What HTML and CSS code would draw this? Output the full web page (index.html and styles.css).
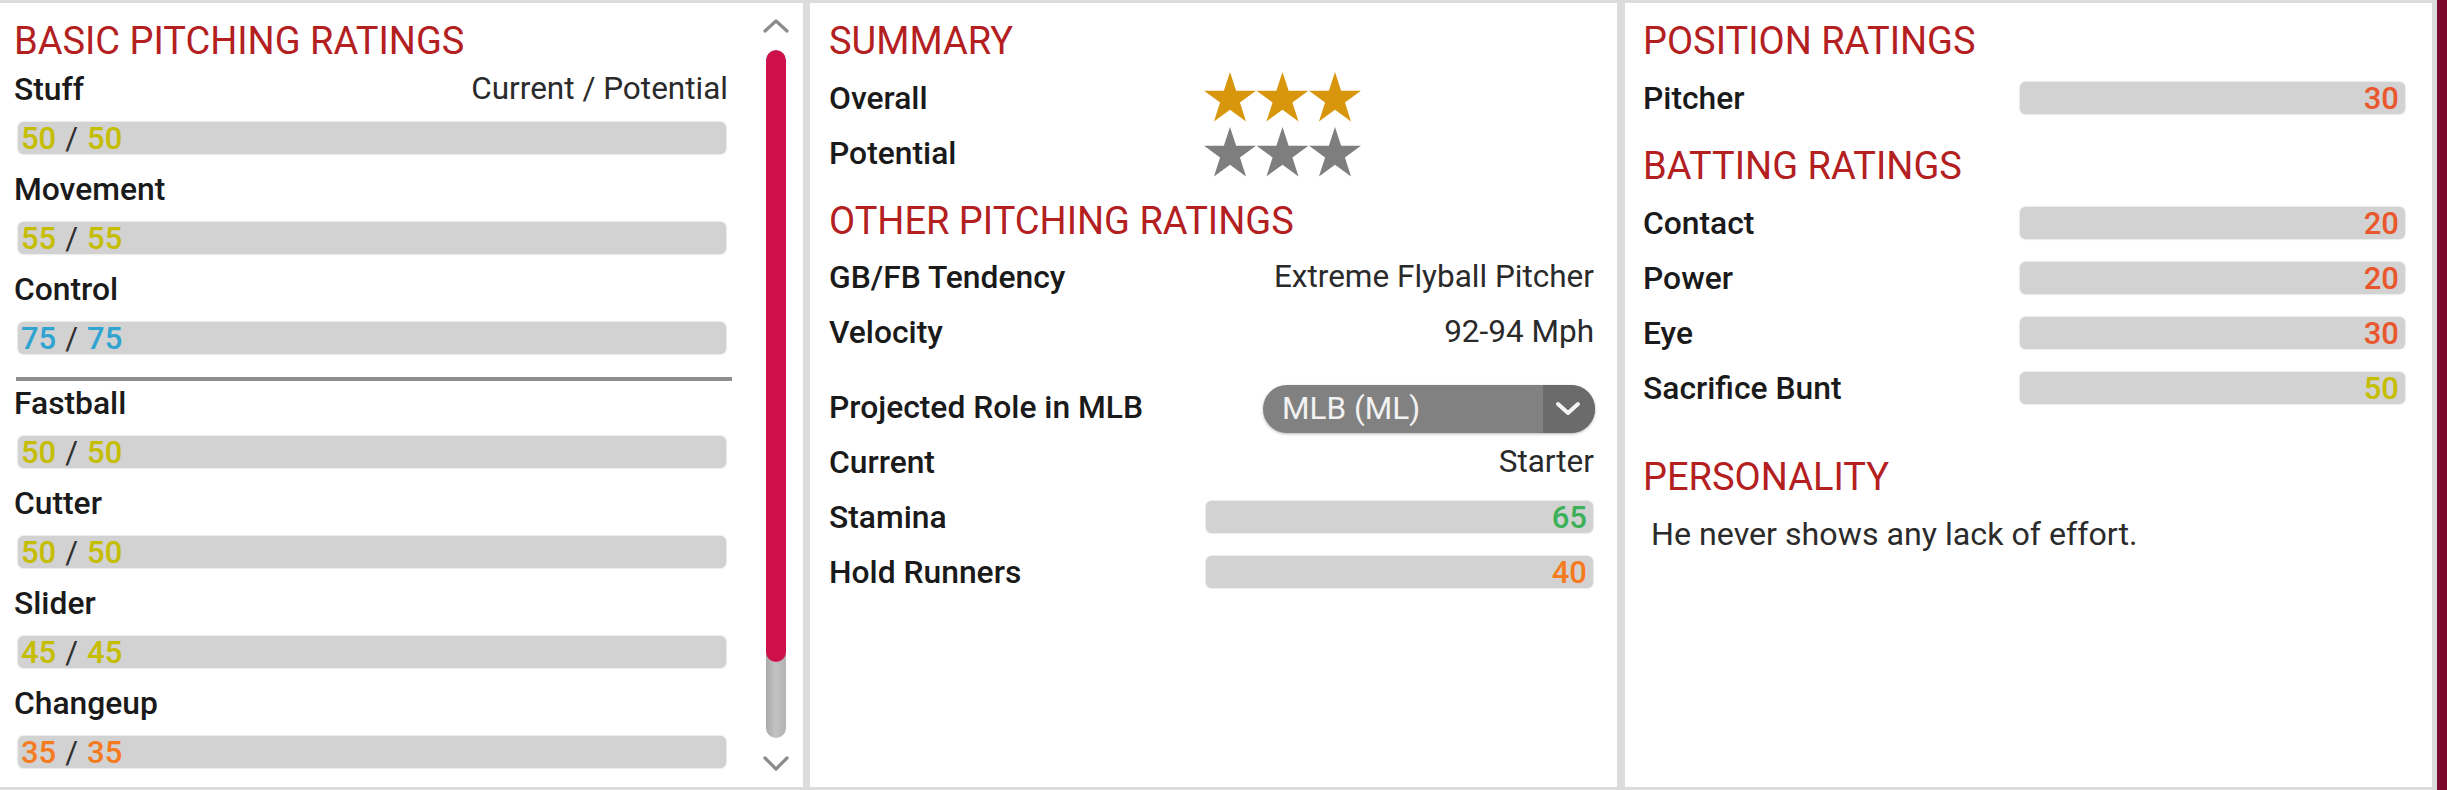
FILE: index.html
```html
<!DOCTYPE html>
<html>
<head>
<meta charset="utf-8">
<title>Pitcher Ratings</title>
<link rel="stylesheet" href="styles.css">
</head>
<body>
<svg class="defs" width="0" height="0" aria-hidden="true">
  <defs>
    <polygon id="star" points="26,0 32.13,18.86 51.96,18.86 35.92,30.52 42.05,49.39 26,37.73 9.95,49.39 16.08,30.52 0.04,18.86 19.87,18.86"/>
  </defs>
</svg>
<div class="page">
  <section class="panel panel-left">
    <div class="scroll-content">
      <h2 class="title">BASIC PITCHING RATINGS</h2>
      <div class="lrow first"><span class="label">Stuff</span><span class="plain">Current / Potential</span></div>
      <div class="bar lbar"><span class="c-yellow">50</span><span class="slash">/</span><span class="c-yellow">50</span></div>
      <div class="lrow"><span class="label">Movement</span></div>
      <div class="bar lbar"><span class="c-yellow">55</span><span class="slash">/</span><span class="c-yellow">55</span></div>
      <div class="lrow"><span class="label">Control</span></div>
      <div class="bar lbar"><span class="c-blue">75</span><span class="slash">/</span><span class="c-blue">75</span></div>
      <div class="sep"></div>
      <div class="lrow after-sep"><span class="label">Fastball</span></div>
      <div class="bar lbar"><span class="c-yellow">50</span><span class="slash">/</span><span class="c-yellow">50</span></div>
      <div class="lrow"><span class="label">Cutter</span></div>
      <div class="bar lbar"><span class="c-yellow">50</span><span class="slash">/</span><span class="c-yellow">50</span></div>
      <div class="lrow"><span class="label">Slider</span></div>
      <div class="bar lbar"><span class="c-yellow">45</span><span class="slash">/</span><span class="c-yellow">45</span></div>
      <div class="lrow"><span class="label">Changeup</span></div>
      <div class="bar lbar"><span class="c-orange">35</span><span class="slash">/</span><span class="c-orange">35</span></div>
    </div>
    <div class="scrollbar">
      <svg class="chev chev-up" width="26" height="15" viewBox="0 0 26 15"><polyline points="2,13 13,3 24,13" fill="none" stroke="#8c8c8c" stroke-width="3.2" stroke-linecap="round" stroke-linejoin="round"/></svg>
      <div class="track"><div class="thumb"></div></div>
      <svg class="chev chev-down" width="26" height="18" viewBox="0 0 26 18"><polyline points="2,3 13,14 24,3" fill="none" stroke="#8c8c8c" stroke-width="3.2" stroke-linecap="round" stroke-linejoin="round"/></svg>
    </div>
  </section>

  <section class="panel panel-mid">
    <h2 class="title">SUMMARY</h2>
    <div class="row first-row"><span class="label col-label">Overall</span>
      <svg class="stars" width="158" height="51" viewBox="0 0 158 51">
        <use href="#star" x="0" y="0" fill="#d8960c"/><use href="#star" x="52.5" y="0" fill="#d8960c"/><use href="#star" x="105" y="0" fill="#d8960c"/>
      </svg>
    </div>
    <div class="row"><span class="label col-label">Potential</span>
      <svg class="stars" width="158" height="51" viewBox="0 0 158 51">
        <use href="#star" x="0" y="0" fill="#7e7e7e"/><use href="#star" x="52.5" y="0" fill="#7e7e7e"/><use href="#star" x="105" y="0" fill="#7e7e7e"/>
      </svg>
    </div>
    <h2 class="title sub">OTHER PITCHING RATINGS</h2>
    <div class="row gap-row"><span class="label">GB/FB Tendency</span><span class="plain">Extreme Flyball Pitcher</span></div>
    <div class="row"><span class="label">Velocity</span><span class="plain">92-94 Mph</span></div>
    <div class="row role-row"><span class="label role-label">Projected Role in MLB</span>
      <div class="select"><span class="select-text">MLB (ML)</span><span class="select-btn"><svg width="26" height="16" viewBox="0 0 26 16"><polyline points="3,3 13,12 23,3" fill="none" stroke="#f4f4f4" stroke-width="4" stroke-linecap="round" stroke-linejoin="round"/></svg></span></div>
    </div>
    <div class="row"><span class="label">Current</span><span class="plain">Starter</span></div>
    <div class="row"><span class="label col-label">Stamina</span><div class="bar vbar c-green">65</div></div>
    <div class="row"><span class="label col-label">Hold Runners</span><div class="bar vbar c-orange">40</div></div>
  </section>

  <section class="panel panel-right">
    <h2 class="title">POSITION RATINGS</h2>
    <div class="row first-row"><span class="label col-label">Pitcher</span><div class="bar vbar c-red">30</div></div>
    <h2 class="title sub">BATTING RATINGS</h2>
    <div class="row gap-row2"><span class="label col-label">Contact</span><div class="bar vbar c-red">20</div></div>
    <div class="row"><span class="label col-label">Power</span><div class="bar vbar c-red">20</div></div>
    <div class="row"><span class="label col-label">Eye</span><div class="bar vbar c-red">30</div></div>
    <div class="row"><span class="label col-label">Sacrifice Bunt</span><div class="bar vbar c-yellow">50</div></div>
    <h2 class="title sub2">PERSONALITY</h2>
    <p class="personality">He never shows any lack of effort.</p>
  </section>
</div>
</body>
</html>
```

FILE: styles.css
```css
* { box-sizing: border-box; }

html, body {
  margin: 0;
  padding: 0;
}

body {
  width: 2447px;
  height: 790px;
  overflow: hidden;
  font-family: Roboto, "Liberation Sans", Arial, sans-serif;
  color: #1c1c1c;
  background: #dcdcdc;
}

.defs { position: absolute; width: 0; height: 0; }

.page {
  display: flex;
  height: 790px;
  padding: 3px 5px 3px 0;
  border-right: 10px solid #7a0a2d;
  background: #dcdcdc;
}

.panel {
  background: #ffffff;
  height: 784px;
  padding-top: 18px;
}

.panel-left {
  width: 803px;
  display: flex;
  padding-left: 14px;
  padding-right: 16px;
}

.panel-mid {
  width: 807px;
  margin-left: 7px;
  padding-left: 19px;
  padding-right: 23px;
}

.panel-right {
  width: 807px;
  margin-left: 8px;
  padding-left: 18px;
  padding-right: 27px;
}

.title {
  margin: 0;
  font-size: 38px;
  line-height: 40px;
  font-weight: 400;
  color: #b3201f;
  white-space: nowrap;
}

.title.sub { margin-top: 21px; }
.title.sub2 { margin-top: 42px; }

.label {
  font-size: 31.8px;
  line-height: 36px;
  font-weight: 500;
  color: #1a1a1a;
  white-space: nowrap;
}

.plain {
  font-size: 31.5px;
  line-height: 36px;
  font-weight: 400;
  color: #2a2a2a;
  white-space: nowrap;
}

/* left panel */
.scroll-content {
  width: 714px;
}

.lrow {
  display: flex;
  justify-content: space-between;
  height: 36px;
  margin-top: 17px;
}

.lrow.first { margin-top: 10px; }
.lrow.after-sep { margin-top: 4px; }

.bar {
  height: 32px;
  background: #d2d2d2;
  border-radius: 6px;
  box-shadow: 0 0 2px rgba(0, 0, 0, 0.28);
  font-size: 31px;
  line-height: 33px;
  font-weight: 500;
  white-space: nowrap;
}

.lbar {
  margin: 15px 2px 0 4px;
  padding-left: 3px;
  display: flex;
}

.slash {
  color: #2e2e2e;
  font-weight: 400;
  margin: 0 9px;
}

.sep {
  height: 4px;
  background: #8e8e8e;
  margin: 23px -4px 0 2px;
}

.scrollbar {
  width: 22px;
  margin-left: 37px;
  display: flex;
  flex-direction: column;
  align-items: center;
}

.chev { display: block; flex: none; }
.chev-up { margin-top: -3px; }

.track {
  width: 20px;
  height: 688px;
  margin-top: 17px;
  border-radius: 10px;
  background: linear-gradient(to right, #a9a9a9, #c2c2c2 45%, #b4b4b4);
  overflow: hidden;
}

.thumb {
  height: 612px;
  border-radius: 10px;
  background: #d0104a;
}

.chev-down { margin-top: 17px; }

/* rows for middle and right */
.row {
  display: flex;
  align-items: center;
  justify-content: space-between;
  height: 55px;
}

.row.first-row { margin-top: 9px; }
.row.gap-row { margin-top: 8px; }
.row.gap-row2 { margin-top: 9px; }
.row.role-row { margin-top: 25px; height: 50px; }

.role-label { margin-bottom: 5px; }

.col-label {
  width: 377px;
  flex: none;
}

.stars {
  display: block;
  margin-left: -2px;
  margin-right: auto;
}

.vbar {
  flex: 1;
  text-align: right;
  padding-right: 6px;
}

.panel-mid .vbar { margin-right: 1px; }
.panel-right .vbar { margin-right: 0; }

.select {
  width: 332px;
  height: 48px;
  border-radius: 24px;
  background: #818181;
  display: flex;
  overflow: hidden;
  box-shadow: 0 1px 3px rgba(0, 0, 0, 0.3);
  margin-right: -1px;
}

.select-text {
  flex: 1;
  padding-left: 19px;
  font-size: 31.5px;
  line-height: 48px;
  color: #f2f2f2;
  white-space: nowrap;
}

.select-btn {
  width: 52px;
  background: #6b6b6b;
  display: flex;
  align-items: center;
  justify-content: center;
  padding-right: 2px;
}

.select-btn svg { display: block; }

.personality {
  margin: 19px 0 0 0;
  padding-left: 8px;
  font-size: 32.2px;
  line-height: 36px;
  color: #2b2b2b;
  white-space: nowrap;
}

.c-yellow { color: #c5bd00; }
.c-blue { color: #2fa4d1; }
.c-orange { color: #f57b1e; }
.c-green { color: #3cb158; }
.c-red { color: #e9572d; }
```
